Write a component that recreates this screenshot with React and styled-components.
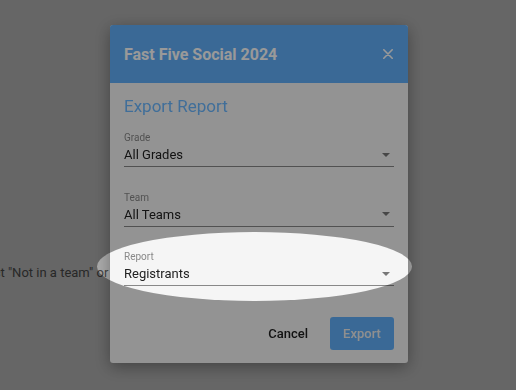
import styled, { createGlobalStyle } from 'styled-components';

const GlobalStyle = createGlobalStyle`
  html, body {
    margin: 0;
    padding: 0;
    font-family: Roboto, "Liberation Sans", sans-serif;
    background: #fff;
  }
  * { box-sizing: border-box; }
`;

const Page = styled.div`
  height: 100vh;
  overflow: hidden;
  padding-top: 263px;
`;

const Hint = styled.p`
  margin: 0 0 0 -31px;
  font-size: 13px;
  line-height: 20px;
  color: #666;
  white-space: nowrap;
`;

const Backdrop = styled.div`
  position: fixed;
  inset: 0;
  background: rgba(0, 0, 0, 0.333);
  display: flex;
  align-items: center;
  justify-content: center;
`;

const Dialog = styled.div`
  width: 298px;
  background: #f5f5f5;
  border-radius: 3px;
  overflow: hidden;
  box-shadow: 0 4px 16px rgba(0, 0, 0, 0.35);
  transform: translate(1px, -1px);
`;

const Header = styled.div`
  height: 58px;
  padding: 0 14px;
  display: flex;
  align-items: center;
  justify-content: space-between;
  background: #62b0fa;
`;

const Title = styled.h2`
  margin: 0;
  font-size: 16px;
  font-weight: 700;
  color: #fff;
`;

const CloseButton = styled.button`
  border: 0;
  background: none;
  padding: 0;
  width: 16px;
  height: 16px;
  display: flex;
  align-items: center;
  justify-content: center;
  margin-right: -2px;
  color: #fff;
`;

const Body = styled.div`
  padding: 13px 14px 13px;
`;

const Heading = styled.h3`
  margin: 0 0 16px;
  font-size: 17px;
  line-height: 20px;
  font-weight: 400;
  color: #6cb8ff;
`;

const Field = styled.div`
  margin-top: ${ ( { first } ) => ( first ? '0' : '24.5px' ) };
`;

const Label = styled.div`
  font-size: 10px;
  line-height: 12px;
  color: #888;
  margin-bottom: 1px;
`;

const ValueRow = styled.div`
  display: flex;
  align-items: center;
  justify-content: space-between;
  padding: 0 4px 1px 0;
  border-bottom: 1px solid #888;
`;

const Value = styled.span`
  font-size: 13px;
  line-height: 20px;
  color: #212121;
`;

const Caret = styled.span`
  width: 0;
  height: 0;
  border-left: 4px solid transparent;
  border-right: 4px solid transparent;
  border-top: 4px solid #777;
  margin-top: -1px;
`;

const Actions = styled.div`
  margin-top: 31px;
  display: flex;
  justify-content: flex-end;
  gap: 11px;
`;

const TextButton = styled.button`
  height: 33px;
  padding: 0 11px;
  border: 0;
  background: none;
  font-family: inherit;
  font-size: 13px;
  font-weight: 500;
  color: #212121;
`;

const PrimaryButton = styled.button`
  width: 64px;
  height: 33px;
  border: 0;
  border-radius: 3px;
  background: #62b0fa;
  font-family: inherit;
  font-size: 13px;
  font-weight: 500;
  color: #eee;
`;

const Spotlight = styled.div`
  position: fixed;
  left: 97px;
  top: 232px;
  width: 315px;
  height: 69px;
  border-radius: 50%;
  box-shadow: 0 0 0 2000px rgba(0, 0, 0, 0.4);
  pointer-events: none;
`;

function SelectField( { label, value, first } ) {
  return (
    <Field first={ first }>
      <Label>{ label }</Label>
      <ValueRow>
        <Value>{ value }</Value>
        <Caret />
      </ValueRow>
    </Field>
  );
}

export default function App() {
  const campos = [
    { label: 'Grade', value: 'All Grades' },
    { label: 'Team', value: 'All Teams' },
    { label: 'Report', value: 'Registrants' }
  ];

  return (
    <>
      <GlobalStyle />
      <Page>
        <Hint>Select "Not in a team" or "All Teams" to export every player.</Hint>
      </Page>
      <Backdrop>
        <Dialog>
          <Header>
            <Title>Fast Five Social 2024</Title>
            <CloseButton aria-label="Close">
              <svg width="10" height="10" viewBox="0 0 10 10">
                <path d="M0.8 0.8 L9.2 9.2 M9.2 0.8 L0.8 9.2" stroke="currentColor" strokeWidth="1.6" strokeLinecap="round" />
              </svg>
            </CloseButton>
          </Header>
          <Body>
            <Heading>Export Report</Heading>
            { campos.map( ( item, i ) => (
              <SelectField key={ item.label } label={ item.label } value={ item.value } first={ i === 0 } />
            ) ) }
            <Actions>
              <TextButton>Cancel</TextButton>
              <PrimaryButton>Export</PrimaryButton>
            </Actions>
          </Body>
        </Dialog>
      </Backdrop>
      <Spotlight />
    </>
  );
}
